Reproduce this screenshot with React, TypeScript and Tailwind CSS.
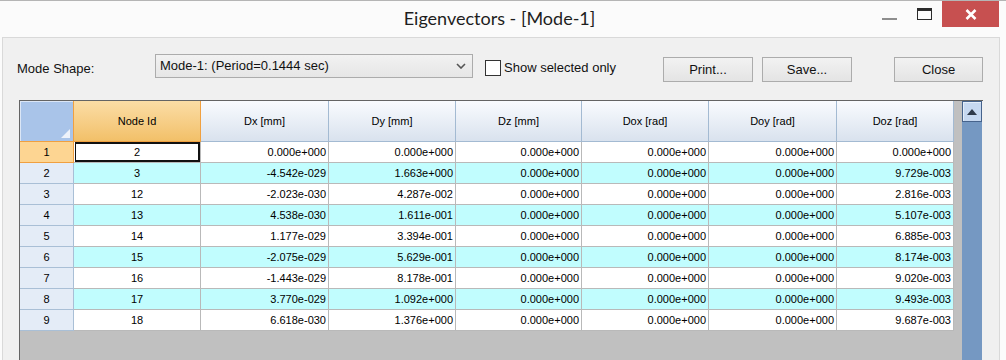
import React from "react";

const cols = [
  { name: "Node Id", w: "w-[127px]" },
  { name: "Dx [mm]", w: "w-[128px]" },
  { name: "Dy [mm]", w: "w-[127px]" },
  { name: "Dz [mm]", w: "w-[126px]" },
  { name: "Dox [rad]", w: "w-[127px]" },
  { name: "Doy [rad]", w: "w-[128px]" },
  { name: "Doz [rad]", w: "w-[117px]" },
];

const Z = "0.000e+000";
const rows: string[][] = [
  ["2", Z, Z, Z, Z, Z, Z],
  ["3", "-4.542e-029", "1.663e+000", Z, Z, Z, "9.729e-003"],
  ["12", "-2.023e-030", "4.287e-002", Z, Z, Z, "2.816e-003"],
  ["13", "4.538e-030", "1.611e-001", Z, Z, Z, "5.107e-003"],
  ["14", "1.177e-029", "3.394e-001", Z, Z, Z, "6.885e-003"],
  ["15", "-2.075e-029", "5.629e-001", Z, Z, Z, "8.174e-003"],
  ["16", "-1.443e-029", "8.178e-001", Z, Z, Z, "9.020e-003"],
  ["17", "3.770e-029", "1.092e+000", Z, Z, Z, "9.493e-003"],
  ["18", "6.618e-030", "1.376e+000", Z, Z, Z, "9.687e-003"],
];

function Btn({ label, w }: { label: string; w: string }) {
  return (
    <div
      className={`${w} h-[25px] mt-[19px] flex items-center justify-center border border-[#acacac] bg-gradient-to-b from-[#f2f2f2] to-[#e4e4e4] text-[13px] text-[#111]`}
    >
      {label}
    </div>
  );
}

export default function App() {
  return (
    <div
      className="w-[1006px] h-[360px] overflow-hidden bg-[#fbfbfb] border-t border-[#b5b5b5] flex flex-col"
      style={{ fontFamily: '"Liberation Sans", Arial, sans-serif' }}
    >
      {/* Title bar */}
      <div className="h-[36px] flex shrink-0">
        <div className="flex-1" />
        <div
          className="flex items-center text-[18px] text-[#1e1e1e] pb-[2px]"
          style={{ fontFamily: 'Lato, "Noto Sans", sans-serif' }}
        >
          Eigenvectors - [Mode-1]
        </div>
        <div className="flex-1 flex justify-end items-start pr-[7px]">
          <div className="w-[16px] h-[26px] mr-[19px] flex items-center pt-[10px]">
            <div className="w-[15px] h-[2px] bg-[#8e8e8e]" />
          </div>
          <div className="w-[16px] h-[26px] mr-[9px] flex items-start pt-[7px]">
            <div className="w-[15px] h-[12px] border border-[#2b2b2b] border-t-[3px]" />
          </div>
          <div className="w-[57px] h-[26px] bg-[#c75050] flex items-center justify-center">
            <svg width="12" height="11" viewBox="0 0 12 11">
              <path d="M1.5 1 L10.5 10 M10.5 1 L1.5 10" stroke="#ffffff" strokeWidth="2.6" />
            </svg>
          </div>
        </div>
      </div>

      {/* Content */}
      <div className="ml-[2px] w-[998px] flex-1 bg-[#f0f0f0] border-t border-l border-r border-[#d9d9d9] flex flex-col">
        {/* Controls */}
        <div className="h-[62px] flex items-start text-[13px] text-[#111] shrink-0">
          <div className="ml-[14px] w-[138px] mt-[21px]">Mode Shape:</div>
          <div className="w-[318px] h-[24px] mt-[16px] border border-[#acacac] bg-gradient-to-b from-[#f2f2f2] to-[#e6e6e6] flex items-center pl-[4px] pr-[6px]">
            <span className="flex-1">Mode-1: (Period=0.1444 sec)</span>
            <svg width="10" height="6" viewBox="0 0 10 6">
              <path d="M1 1 L5 5 L9 1" stroke="#555" strokeWidth="1.6" fill="none" />
            </svg>
          </div>
          <div className="w-[178px] ml-[12px] mt-[20px] flex items-center">
            <div className="w-[16px] h-[16px] border border-[#333] bg-white" />
            <span className="ml-[3px]">Show selected only</span>
          </div>
          <Btn label="Print..." w="w-[90px]" />
          <div className="w-[9px]" />
          <Btn label="Save..." w="w-[90px]" />
          <div className="w-[42px]" />
          <Btn label="Close" w="w-[89px]" />
        </div>

        {/* Grid */}
        <div className="ml-[16px] flex-1 flex border-t border-l border-[#646464] w-[964px] text-[11px] text-black">
          <div className="w-[942px] bg-[#c0c0c0] flex flex-col">
            {/* header */}
            <div className="flex h-[41px]">
              <div className="w-[54px] h-full bg-[#a9c4e9] border-r border-b border-[#f0a040] shadow-[inset_1px_1px_0_#dbe6f6] flex items-end justify-end p-[3px]">
                <svg width="9" height="9" viewBox="0 0 9 9">
                  <path d="M9 0 L9 9 L0 9 Z" fill="#edf2fa" />
                </svg>
              </div>
              {cols.map((c, i) => (
                <div
                  key={c.name}
                  className={`${c.w} h-full flex items-center justify-center border-r border-b ${
                    i === 0
                      ? "bg-gradient-to-b from-[#fbdda5] to-[#f2c068] border-[#f0a040]"
                      : "bg-gradient-to-b from-[#f9fbfe] to-[#d9e2ee] border-[#a3bad2]"
                  }`}
                >
                  {c.name}
                </div>
              ))}
            </div>
            {/* rows */}
            {rows.map((r, ri) => (
              <div key={ri} className="flex h-[21px]">
                <div
                  className={`w-[54px] h-full flex items-center justify-center border-r border-b ${
                    ri === 0 ? "bg-[#fdd592] border-[#f0a040]" : "bg-[#e4ecf7] border-[#a9bfd6]"
                  }`}
                >
                  {ri + 1}
                </div>
                {r.map((v, ci) => (
                  <div
                    key={ci}
                    className={`${cols[ci].w} h-full flex items-center border-r border-b border-[#b9b9b9] ${
                      ci === 0 ? "justify-center" : "justify-end pr-[2px]"
                    } ${ri % 2 === 1 ? "bg-[#c1fdfe]" : "bg-white"} ${
                      ri === 0 && ci === 0 ? "shadow-[inset_1px_0_0_#fff,inset_0_0_0_2px_#111]" : ""
                    }`}
                  >
                    {v}
                  </div>
                ))}
              </div>
            ))}
          </div>
          {/* scrollbar */}
          <div className="w-[20px] bg-[#7598c2] flex flex-col">
            <div className="h-[21px] border border-[#46638c] bg-[#c6d8f0] shadow-[inset_1px_1px_0_#e3edf9] flex items-center justify-center">
              <svg width="10" height="6" viewBox="0 0 10 6">
                <path d="M5 0 L10 6 L0 6 Z" fill="#2f3a4a" />
              </svg>
            </div>
          </div>
        </div>
      </div>
    </div>
  );
}
